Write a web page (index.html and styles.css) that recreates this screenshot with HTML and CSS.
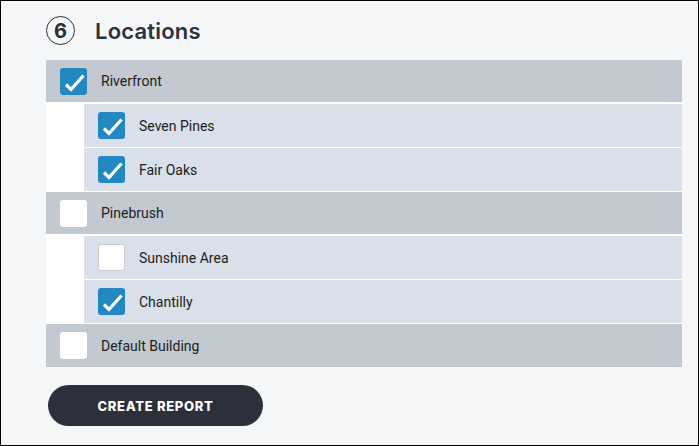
FILE: index.html
```html
<!DOCTYPE html>
<html lang="en">
<head>
<meta charset="utf-8">
<title>Locations</title>
<link rel="stylesheet" href="styles.css">
</head>
<body>
<div class="page">
  <div class="header">
    <span class="step">6</span>
    <h2 class="title">Locations</h2>
  </div>
  <div class="list">
    <div class="group">
      <label class="row parent"><span class="box checked"><svg viewBox="0 0 27 27"><path d="M6 16.5 L11 21.5 L23.5 7.5"/></svg></span><span class="label">Riverfront</span></label>
      <label class="row child"><span class="box checked"><svg viewBox="0 0 27 27"><path d="M6 16.5 L11 21.5 L23.5 7.5"/></svg></span><span class="label">Seven Pines</span></label>
      <label class="row child"><span class="box checked"><svg viewBox="0 0 27 27"><path d="M6 16.5 L11 21.5 L23.5 7.5"/></svg></span><span class="label">Fair Oaks</span></label>
    </div>
    <div class="group">
      <label class="row parent"><span class="box"></span><span class="label">Pinebrush</span></label>
      <label class="row child"><span class="box bordered"></span><span class="label">Sunshine Area</span></label>
      <label class="row child"><span class="box checked"><svg viewBox="0 0 27 27"><path d="M6 16.5 L11 21.5 L23.5 7.5"/></svg></span><span class="label">Chantilly</span></label>
    </div>
    <div class="group">
      <label class="row parent last"><span class="box"></span><span class="label">Default Building</span></label>
    </div>
  </div>
  <button class="btn" type="button">CREATE REPORT</button>
</div>
</body>
</html>
```
FILE: styles.css
```css
html, body {
  margin: 0;
  padding: 0;
}
body {
  background: #f5f6f8;
  font-family: Roboto, "Liberation Sans", Arial, sans-serif;
}
.page {
  box-sizing: border-box;
  width: 699px;
  height: 446px;
  border: 1px solid #000;
  background: #f5f6f8;
  padding: 15px 16px 0 45px;
}
.header {
  display: flex;
  align-items: center;
  height: 29px;
  gap: 20px;
  margin-bottom: 15px;
}
.step {
  box-sizing: border-box;
  width: 29px;
  height: 29px;
  border: 1.5px solid #2b2f38;
  border-radius: 50%;
  display: flex;
  align-items: center;
  justify-content: center;
  font-family: Inter, "Noto Sans", sans-serif;
  font-weight: 700;
  font-size: 20px;
  color: #2b2f38;
}
.title {
  margin: 0;
  font-family: Inter, "Noto Sans", sans-serif;
  font-weight: 600;
  font-size: 22px;
  color: #2d3240;
  letter-spacing: 0.2px;
}
.list {
  background: #ffffff;
}
.row {
  display: flex;
  align-items: center;
  box-sizing: border-box;
  font-size: 14px;
  color: #1b1d21;
  padding-left: 14px;
  gap: 14px;
}
.parent {
  height: 44px;
  background: #c3c9d1;
  border-bottom: 2px solid #ffffff;
}
.parent.last {
  border-bottom: 0;
  height: 43px;
}
.child {
  height: 44px;
  margin-left: 38px;
  background: #d9e0e9;
  border-bottom: 1px solid #ffffff;
}
.box {
  box-sizing: border-box;
  width: 27px;
  height: 27px;
  border-radius: 3px;
  background: #ffffff;
  display: flex;
  flex: none;
}
.box.bordered {
  border: 1px solid #c9ccd0;
}
.box.checked {
  background: #2189bf;
}
.box svg {
  width: 27px;
  height: 27px;
}
.box path {
  fill: none;
  stroke: #ffffff;
  stroke-width: 3.2;
}
.btn {
  display: block;
  margin: 18px 0 0 2px;
  width: 215px;
  height: 41px;
  border: 0;
  border-radius: 21px;
  background: #2b303b;
  color: #ffffff;
  font-family: Inter, "Noto Sans", sans-serif;
  font-weight: 800;
  font-size: 13px;
  letter-spacing: 0.7px;
  padding: 0;
}
```
